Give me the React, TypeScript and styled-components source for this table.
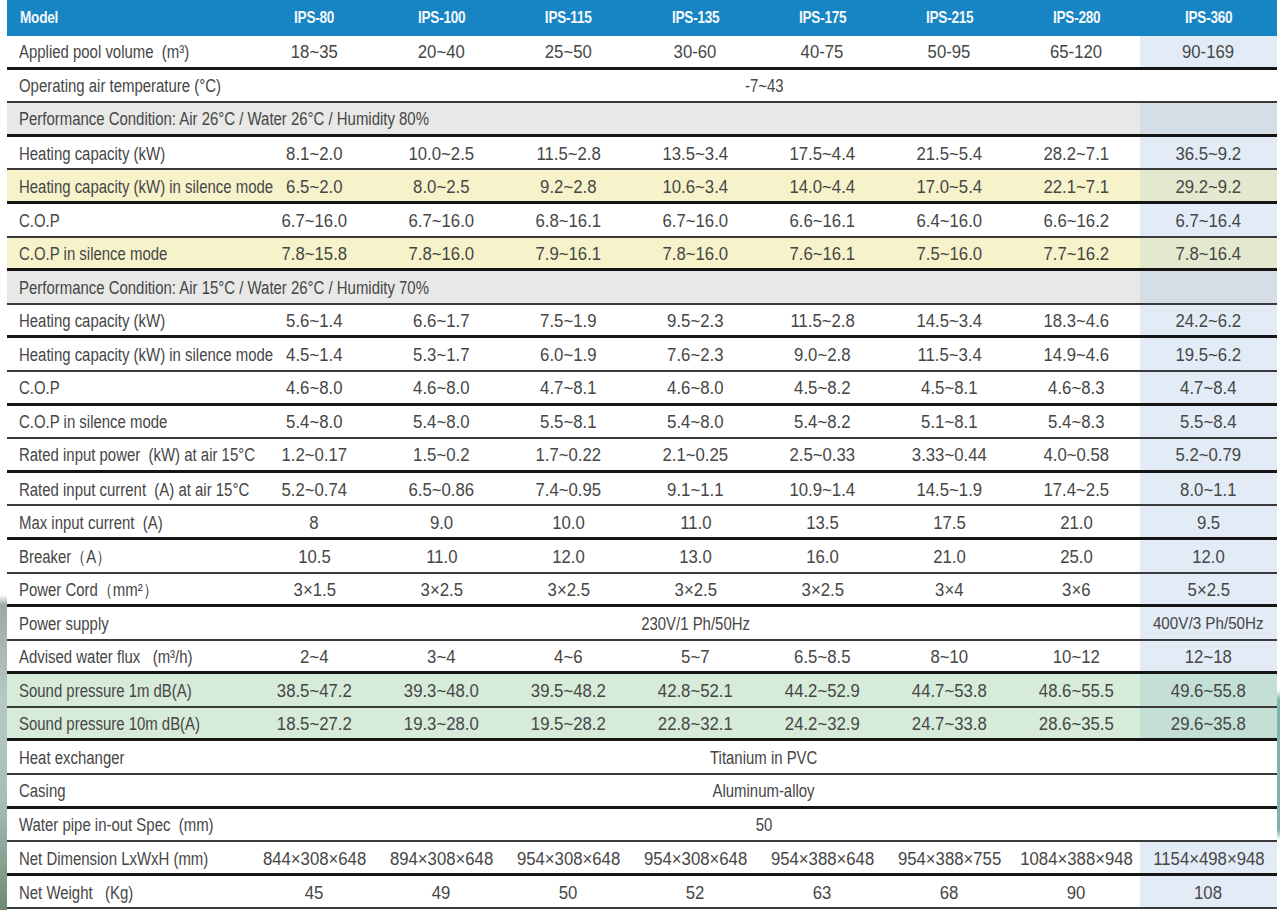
import React from 'react';
import styled, { createGlobalStyle } from 'styled-components';

const GlobalStyle = createGlobalStyle`
  html, body {
    margin: 0;
    padding: 0;
    background: #ffffff;
  }
  body {
    font-family: "Liberation Sans", Arial, sans-serif;
    color: #444444;
  }
`;

type Tone = 'plain' | 'yellow' | 'gray' | 'green';

const rowBg: Record<Tone, string> = {
  plain: '#ffffff',
  yellow: '#f6f3cb',
  gray: '#e8e8e6',
  green: '#d6ebd9',
};

const lastBg: Record<Tone, string> = {
  plain: '#e2ebf6',
  yellow: '#e2e9cf',
  gray: '#d5dde7',
  green: '#c4dfd5',
};

const Page = styled.div`
  display: flex;
  width: 1280px;
  height: 910px;
  overflow: hidden;
`;

const EdgeLeft = styled.div`
  width: 7px;
  flex: none;
  background: linear-gradient(
    to bottom,
    #ffffff 0,
    #ffffff 595px,
    #9aa9a3 605px,
    #b7c9c6 700px,
    #a7bdb7 800px,
    #6f8a74 910px
  );
`;

const EdgeRight = styled.div`
  width: 3px;
  flex: none;
  background: linear-gradient(to bottom, #ffffff 0, #ffffff 690px, #7fb3ad 700px, #7fb3ad 830px, #ffffff 840px);
`;

const Table = styled.div`
  width: 1270px;
  display: flex;
  flex-direction: column;
`;

const HeadRow = styled.div`
  display: grid;
  grid-template-columns: 244px repeat(7, 127px) 137px;
  height: 36px;
  background: #1784c3;
`;

// narrow type, like Arial Narrow in the printed sheet
const Narrow = styled.span<{ $origin?: string; $scale?: number }>`
  display: inline-block;
  transform: scaleX(${({ $scale }) => $scale ?? 0.8});
  transform-origin: ${({ $origin }) => $origin ?? 'center'};
`;

const HeadCell = styled.div<{ $left?: boolean }>`
  display: flex;
  align-items: center;
  justify-content: ${({ $left }) => ($left ? 'flex-start' : 'center')};
  padding-left: ${({ $left }) => ($left ? '13px' : '0')};
  color: #f4f8fc;
  font-weight: bold;
  font-size: 17px;
  letter-spacing: -0.3px;
  white-space: pre;
`;

const Row = styled.div<{ $tone: Tone; $heavy?: boolean }>`
  display: grid;
  grid-template-columns: 244px repeat(7, 127px) 137px;
  height: 33.6px;
  box-sizing: border-box;
  background: ${({ $tone }) => rowBg[$tone]};
  border-bottom: ${({ $heavy }) => ($heavy ? '3px solid #151515' : '2px solid #3a3a3a')};
`;

const Label = styled.div<{ $span?: number }>`
  grid-column: ${({ $span }) => ($span ? `span ${$span}` : 'auto')};
  display: flex;
  align-items: center;
  padding: 3px 0 0 12px;
  font-size: 18px;
  white-space: pre;
  color: #464646;
`;

const Cell = styled.div<{ $span?: number; $last?: boolean; $tone?: Tone; $small?: boolean }>`
  grid-column: ${({ $span }) => ($span ? `span ${$span}` : 'auto')};
  display: flex;
  align-items: center;
  justify-content: center;
  padding-top: 3px;
  font-size: ${({ $small }) => ($small ? '16px' : '18px')};
  white-space: pre;
  color: #464646;
  background: ${({ $last, $tone }) => ($last && $tone ? lastBg[$tone] : 'transparent')};
`;

type RowDef = {
  label: string;
  tone?: Tone;
  values?: string[];
  merged?: string;
  mergedSpan?: number;
  tail?: string;
  section?: boolean;
};

const LABEL_SCALE = 0.83;
const VALUE_SCALE = 0.93;

const models = ['IPS-80', 'IPS-100', 'IPS-115', 'IPS-135', 'IPS-175', 'IPS-215', 'IPS-280', 'IPS-360'];

const rows: RowDef[] = [
  { label: 'Applied pool volume  (m³)', values: ['18~35', '20~40', '25~50', '30-60', '40-75', '50-95', '65-120', '90-169'] },
  { label: 'Operating air temperature (°C)', merged: '-7~43', mergedSpan: 8 },
  { label: 'Performance Condition: Air 26°C / Water 26°C / Humidity 80%', tone: 'gray', section: true },
  { label: 'Heating capacity (kW)', values: ['8.1~2.0', '10.0~2.5', '11.5~2.8', '13.5~3.4', '17.5~4.4', '21.5~5.4', '28.2~7.1', '36.5~9.2'] },
  { label: 'Heating capacity (kW) in silence mode', tone: 'yellow', values: ['6.5~2.0', '8.0~2.5', '9.2~2.8', '10.6~3.4', '14.0~4.4', '17.0~5.4', '22.1~7.1', '29.2~9.2'] },
  { label: 'C.O.P', values: ['6.7~16.0', '6.7~16.0', '6.8~16.1', '6.7~16.0', '6.6~16.1', '6.4~16.0', '6.6~16.2', '6.7~16.4'] },
  { label: 'C.O.P in silence mode', tone: 'yellow', values: ['7.8~15.8', '7.8~16.0', '7.9~16.1', '7.8~16.0', '7.6~16.1', '7.5~16.0', '7.7~16.2', '7.8~16.4'] },
  { label: 'Performance Condition: Air 15°C / Water 26°C / Humidity 70%', tone: 'gray', section: true },
  { label: 'Heating capacity (kW)', values: ['5.6~1.4', '6.6~1.7', '7.5~1.9', '9.5~2.3', '11.5~2.8', '14.5~3.4', '18.3~4.6', '24.2~6.2'] },
  { label: 'Heating capacity (kW) in silence mode', values: ['4.5~1.4', '5.3~1.7', '6.0~1.9', '7.6~2.3', '9.0~2.8', '11.5~3.4', '14.9~4.6', '19.5~6.2'] },
  { label: 'C.O.P', values: ['4.6~8.0', '4.6~8.0', '4.7~8.1', '4.6~8.0', '4.5~8.2', '4.5~8.1', '4.6~8.3', '4.7~8.4'] },
  { label: 'C.O.P in silence mode', values: ['5.4~8.0', '5.4~8.0', '5.5~8.1', '5.4~8.0', '5.4~8.2', '5.1~8.1', '5.4~8.3', '5.5~8.4'] },
  { label: 'Rated input power  (kW) at air 15°C', values: ['1.2~0.17', '1.5~0.2', '1.7~0.22', '2.1~0.25', '2.5~0.33', '3.33~0.44', '4.0~0.58', '5.2~0.79'] },
  { label: 'Rated input current  (A) at air 15°C', values: ['5.2~0.74', '6.5~0.86', '7.4~0.95', '9.1~1.1', '10.9~1.4', '14.5~1.9', '17.4~2.5', '8.0~1.1'] },
  { label: 'Max input current  (A)', values: ['8', '9.0', '10.0', '11.0', '13.5', '17.5', '21.0', '9.5'] },
  { label: 'Breaker（A）', values: ['10.5', '11.0', '12.0', '13.0', '16.0', '21.0', '25.0', '12.0'] },
  { label: 'Power Cord（mm²）', values: ['3×1.5', '3×2.5', '3×2.5', '3×2.5', '3×2.5', '3×4', '3×6', '5×2.5'] },
  { label: 'Power supply', merged: '230V/1 Ph/50Hz', mergedSpan: 7, tail: '400V/3 Ph/50Hz' },
  { label: 'Advised water flux   (m³/h)', values: ['2~4', '3~4', '4~6', '5~7', '6.5~8.5', '8~10', '10~12', '12~18'] },
  { label: 'Sound pressure 1m dB(A)', tone: 'green', values: ['38.5~47.2', '39.3~48.0', '39.5~48.2', '42.8~52.1', '44.2~52.9', '44.7~53.8', '48.6~55.5', '49.6~55.8'] },
  { label: 'Sound pressure 10m dB(A)', tone: 'green', values: ['18.5~27.2', '19.3~28.0', '19.5~28.2', '22.8~32.1', '24.2~32.9', '24.7~33.8', '28.6~35.5', '29.6~35.8'] },
  { label: 'Heat exchanger', merged: 'Titanium in PVC', mergedSpan: 8 },
  { label: 'Casing', merged: 'Aluminum-alloy', mergedSpan: 8 },
  { label: 'Water pipe in-out Spec  (mm)', merged: '50', mergedSpan: 8 },
  { label: 'Net Dimension LxWxH (mm)', values: ['844×308×648', '894×308×648', '954×308×648', '954×308×648', '954×388×648', '954×388×755', '1084×388×948', '1154×498×948'] },
  { label: 'Net Weight   (Kg)', values: ['45', '49', '50', '52', '63', '68', '90', '108'] },
];

function RowLabel({ text, span }: { text: string; span?: number }) {
  return (
    <Label $span={span}>
      <Narrow $origin="left" $scale={LABEL_SCALE}>
        {text}
      </Narrow>
    </Label>
  );
}

function SpecRow({ row, index }: { row: RowDef; index: number }) {
  const tone = row.tone ?? 'plain';
  const heavy = index % 2 === 0;

  if (row.section) {
    return (
      <Row $tone={tone} $heavy={heavy}>
        <RowLabel text={row.label} span={8} />
        <Cell $last $tone={tone} />
      </Row>
    );
  }

  if (row.merged) {
    return (
      <Row $tone={tone} $heavy={heavy}>
        <RowLabel text={row.label} />
        <Cell $span={row.mergedSpan}>
          <Narrow $scale={LABEL_SCALE}>{row.merged}</Narrow>
        </Cell>
        {row.tail && (
          <Cell $last $tone={tone} $small>
            <Narrow $scale={0.95}>{row.tail}</Narrow>
          </Cell>
        )}
      </Row>
    );
  }

  const values = row.values ?? [];
  return (
    <Row $tone={tone} $heavy={heavy}>
      <RowLabel text={row.label} />
      {values.map((v, i) => (
        <Cell key={i} $last={i === values.length - 1} $tone={tone}>
          <Narrow $scale={VALUE_SCALE}>{v}</Narrow>
        </Cell>
      ))}
    </Row>
  );
}

export default function App() {
  return (
    <>
      <GlobalStyle />
      <Page>
        <EdgeLeft />
        <Table>
          <HeadRow>
            <HeadCell $left>
              <Narrow $origin="left">Model</Narrow>
            </HeadCell>
            {models.map((m) => (
              <HeadCell key={m}>
                <Narrow>{m}</Narrow>
              </HeadCell>
            ))}
          </HeadRow>
          {rows.map((row, i) => (
            <SpecRow key={i} row={row} index={i} />
          ))}
        </Table>
        <EdgeRight />
      </Page>
    </>
  );
}
